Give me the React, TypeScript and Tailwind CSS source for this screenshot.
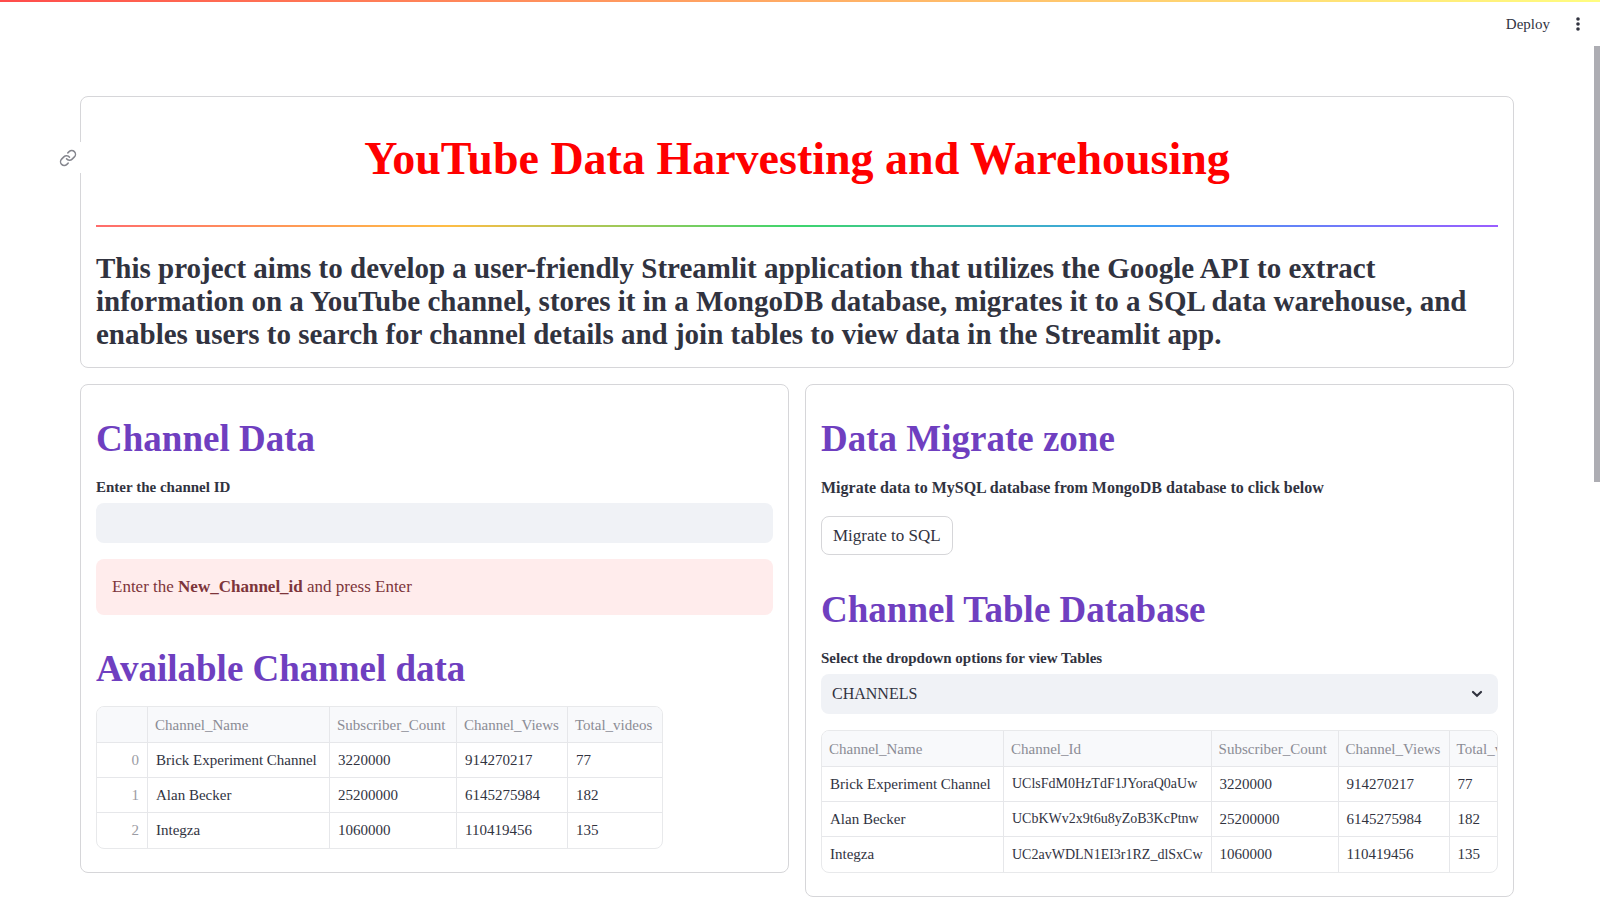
import type { ReactNode } from "react";

type Row = { name: string; id: string; subscribers: string; views: string; videos: string };

const channels: Row[] = [
  { name: "Brick Experiment Channel", id: "UClsFdM0HzTdF1JYoraQ0aUw", subscribers: "3220000", views: "914270217", videos: "77" },
  { name: "Alan Becker", id: "UCbKWv2x9t6u8yZoB3KcPtnw", subscribers: "25200000", views: "6145275984", videos: "182" },
  { name: "Integza", id: "UC2avWDLN1EI3r1RZ_dlSxCw", subscribers: "1060000", views: "110419456", videos: "135" },
];

type Column = { title: string; width: string; value: (row: Row, index: number) => string; cell?: string };

const nameColumn: Column = { title: "Channel_Name", width: "w-[182px]", value: (r) => r.name };
const statColumns: Column[] = [
  { title: "Subscriber_Count", width: "w-[127px]", value: (r) => r.subscribers },
  { title: "Channel_Views", width: "w-[111px]", value: (r) => r.views },
  { title: "Total_videos", width: "w-[94px]", value: (r) => r.videos },
];

const summaryColumns: Column[] = [
  { title: "", width: "w-[51px]", value: (_r, i) => String(i), cell: "text-right text-[#9b9ca4]" },
  nameColumn,
  ...statColumns,
];

const detailColumns: Column[] = [
  nameColumn,
  { title: "Channel_Id", width: "w-[207px]", value: (r) => r.id, cell: "text-sm" },
  ...statColumns,
];

function Card({ children }: { children: ReactNode }) {
  return <section className="min-w-0 rounded-lg border border-[#d6d6d9] px-[15px] py-4">{children}</section>;
}

function SectionTitle({ children }: { children: ReactNode }) {
  return <h2 className="py-4 text-[37px] leading-[43px] font-bold text-[#6f3fc0]">{children}</h2>;
}

function DataTable({ columns, label }: { columns: Column[]; label: string }) {
  return (
    <div className="mb-[7px] w-fit max-w-full overflow-hidden rounded-lg border border-[#e8e9eb]">
      <table aria-label={label} className="w-max table-fixed border-separate border-spacing-0 text-[15px]">
        <thead>
          <tr className="h-9 bg-[#f8f9fb] text-[#8b8c95]">
            {columns.map((c) => (
              <th
                key={c.title}
                scope="col"
                className={`${c.width} border-r border-b border-[#e6e7ea] px-[7px] pt-0.5 text-left font-normal whitespace-nowrap last:border-r-0`}
              >
                {c.title}
              </th>
            ))}
          </tr>
        </thead>
        <tbody>
          {channels.map((row, i) => (
            <tr key={row.id} className="group h-[35px]">
              {columns.map((c) => (
                <td
                  key={c.title}
                  className={`border-r border-b border-[#e6e7ea] px-2 whitespace-nowrap group-last:border-b-0 last:border-r-0 ${c.cell ?? ""}`}
                >
                  {c.value(row, i)}
                </td>
              ))}
            </tr>
          ))}
        </tbody>
      </table>
    </div>
  );
}

function LinkIcon() {
  return (
    <svg
      className="size-[18px]"
      viewBox="0 0 24 24"
      fill="none"
      stroke="currentColor"
      strokeWidth="2"
      strokeLinecap="round"
      strokeLinejoin="round"
      aria-hidden="true"
    >
      <path d="M10 13a5 5 0 0 0 7.54.54l3-3a5 5 0 0 0-7.07-7.07l-1.72 1.71" />
      <path d="M14 11a5 5 0 0 0-7.54-.54l-3 3a5 5 0 0 0 7.07 7.07l1.71-1.71" />
    </svg>
  );
}

export default function App() {
  return (
    <div className="min-h-screen bg-white font-['Source_Serif_Pro','Liberation_Serif',serif] text-[#31333f]">
      <div className="h-0.5 bg-linear-to-r from-[#ff4b4b] to-[#fffd80]" />
      <header className="flex h-11 items-center justify-end gap-5 pr-[14px]">
        <button type="button" className="text-[15px]">
          Deploy
        </button>
        <button type="button" aria-label="Main menu">
          <svg className="size-4" viewBox="0 0 16 16" fill="currentColor" aria-hidden="true">
            <circle cx="8" cy="3" r="1.8" />
            <circle cx="8" cy="8" r="1.8" />
            <circle cx="8" cy="13" r="1.8" />
          </svg>
        </button>
      </header>
      <div className="fixed top-[46px] right-0 h-[436px] w-1.5 bg-[#adadb3]" />

      <main className="flex flex-col gap-4 pt-[50px] pr-[86px] pl-20">
        <Card>
          <div className="relative">
            <h1 id="title" className="pt-5 pb-4 text-center text-[46px] leading-[52px] font-bold text-[#ff0000]">
              YouTube Data Harvesting and Warehousing
            </h1>
            <a
              href="#title"
              aria-label="Link to heading"
              className="absolute top-[29px] right-full flex h-[31px] w-[37px] items-center bg-white text-[#85868e]"
            >
              <LinkIcon />
            </a>
          </div>
          <hr className="mt-6 mb-[25px] h-0.5 border-0 bg-[linear-gradient(to_right,#ff6c6c,#ffbd45,#3dd56d,#3d9df3,#9a5dff)]" />
          <p className="text-[29px] leading-[33px] font-bold">
            This project aims to develop a user-friendly Streamlit application that utilizes the Google API to extract
            information on a YouTube channel, stores it in a MongoDB database, migrates it to a SQL data warehouse, and
            enables users to search for channel details and join tables to view data in the Streamlit app.
          </p>
        </Card>

        <div className="grid grid-cols-2 items-start gap-4">
          <Card>
            <SectionTitle>Channel Data</SectionTitle>
            <label htmlFor="channel-id" className="mb-1 block text-[15px] leading-[23px] font-bold">
              Enter the channel ID
            </label>
            <input id="channel-id" type="text" className="block h-10 w-full rounded-lg bg-[#f0f2f6] px-3 text-base outline-none" />
            <p className="mt-4 mb-4 rounded-lg bg-[#ffecec] p-4 text-[17px] leading-6 text-[#7d353b]">
              Enter the <strong>New_Channel_id</strong> and press Enter
            </p>
            <SectionTitle>Available Channel data</SectionTitle>
            <DataTable columns={summaryColumns} label="Available channel data" />
          </Card>

          <Card>
            <SectionTitle>Data Migrate zone</SectionTitle>
            <p className="text-[16px] leading-6 font-bold">
              Migrate data to MySQL database from MongoDB database to click below
            </p>
            <button type="button" className="mt-4 mb-[17px] flex h-[39px] items-center rounded-lg border border-[#d6d6d9] px-[11px] text-[17px]">
              Migrate to SQL
            </button>
            <SectionTitle>Channel Table Database</SectionTitle>
            <label htmlFor="table-select" className="mb-1 block text-[15px] leading-[23px] font-bold">
              Select the dropdown options for view Tables
            </label>
            <div className="relative mb-4">
              <select
                id="table-select"
                className="block h-10 w-full appearance-none rounded-lg bg-[#f0f2f6] px-[11px] text-[16px] outline-none"
              >
                <option>CHANNELS</option>
              </select>
              <svg
                className="pointer-events-none absolute top-3 right-[13px] size-4"
                viewBox="0 0 16 16"
                fill="none"
                stroke="currentColor"
                strokeWidth="2.2"
                strokeLinecap="round"
                aria-hidden="true"
              >
                <path d="M4 6 8 9.8 12 6" />
              </svg>
            </div>
            <DataTable columns={detailColumns} label="Channel table" />
          </Card>
        </div>
      </main>
    </div>
  );
}
